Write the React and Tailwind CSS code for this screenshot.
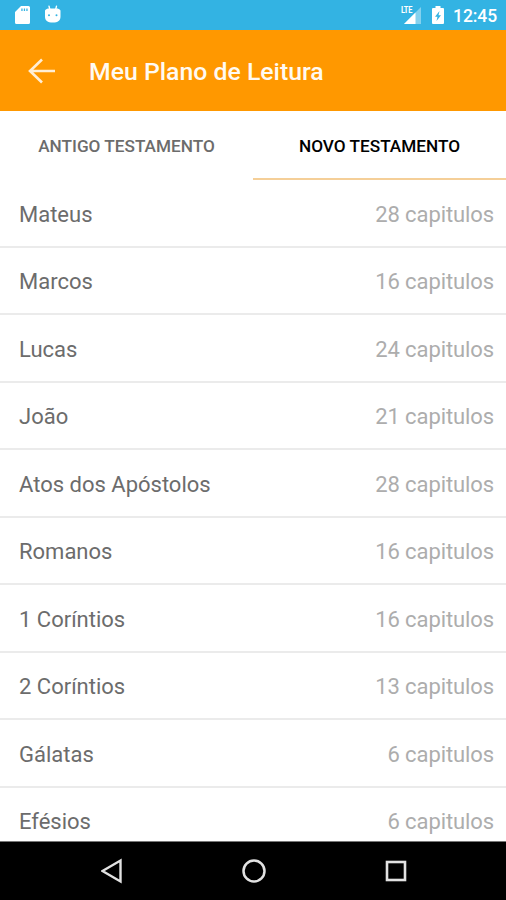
const books = [
  { name: "Mateus", chapters: 28 },
  { name: "Marcos", chapters: 16 },
  { name: "Lucas", chapters: 24 },
  { name: "João", chapters: 21 },
  { name: "Atos dos Apóstolos", chapters: 28 },
  { name: "Romanos", chapters: 16 },
  { name: "1 Coríntios", chapters: 16 },
  { name: "2 Coríntios", chapters: 13 },
  { name: "Gálatas", chapters: 6 },
  { name: "Efésios", chapters: 6 },
];

const StatusBar = () => (
  <div className="flex h-[30px] shrink-0 items-center justify-between bg-[#33b3e3] pl-[15px] pr-[9px] text-white">
    <div className="flex items-center gap-[14px]">
      {/* SD card */}
      <svg width="16" height="20" viewBox="0 0 16 20">
        <path
          fill="currentColor"
          fillRule="evenodd"
          d="M6 1h7.5A1.5 1.5 0 0 1 15 2.5V17.5a1.5 1.5 0 0 1-1.5 1.5h-12A1.5 1.5 0 0 1 0 17.5V7zM6.300 3.5v2.5h1.300v-2.5zm2.5 0v2.5h1.300v-2.5zm2.5 0v2.5h1.300v-2.5z"
        />
      </svg>
      {/* Android head */}
      <svg width="16" height="20" viewBox="0 0 16 20">
        <path
          d="M4 1.200l1 4M11.5 1.200l-1 4"
          stroke="currentColor"
          strokeWidth="1.4"
          strokeLinecap="round"
        />
        <path
          fill="currentColor"
          fillRule="evenodd"
          d="M0 5.5C1 4 2.5 3.5 4 3.5h7.5c1.7 0 3 .5 4 2v6c0 4-2.5 6-7.7 6S0 15.5 0 11.5zM4 9.2a1 1 0 1 0 0 2 1 1 0 0 0 0-2m7.5 0a1 1 0 1 0 0 2 1 1 0 0 0 0-2"
        />
      </svg>
    </div>
    <div className="flex items-center">
      <div className="relative mr-[11px] h-5 w-5">
        <svg width="20" height="20" viewBox="0 0 20 20">
          <path d="M20 2v17H3z" fill="currentColor" opacity=".4" />
          <path d="M14.5 7.5V19H3z" fill="currentColor" />
        </svg>
        <span className="absolute left-0 top-px origin-left scale-x-[.78] text-[9.5px] font-bold leading-[8px] tracking-[-0.4px]">
          LTE
        </span>
      </div>
      {/* Charging battery */}
      <svg className="mr-[9px]" width="12" height="20" viewBox="0 0 12 20">
        <path
          fill="currentColor"
          fillRule="evenodd"
          d="M3.5 1h5v2H11a1 1 0 0 1 1 1v14a1 1 0 0 1-1 1H1a1 1 0 0 1-1-1V4a1 1 0 0 1 1-1h2.5zM7.5 6L3 11.8h2.5L4.5 16 9 10.2H6.5z"
        />
      </svg>
      <span className="translate-y-px text-[17.5px] font-medium leading-5 tracking-[-0.1px]">
        12:45
      </span>
    </div>
  </div>
);

const Header = () => (
  <header className="flex h-[81px] shrink-0 items-center bg-[#ff9800] pl-[28px] text-white">
    <svg width="27" height="26" viewBox="0 0 27 26" fill="none">
      <path
        d="M14 1.5L2 13l12 11.5M2 13h25"
        stroke="#ffeed5"
        strokeWidth="2.6"
      />
    </svg>
    <h1 className="ml-[34px] pt-[2px] text-[24.8px] font-medium leading-8 text-[#fffaf2]">
      Meu Plano de Leitura
    </h1>
  </header>
);

const Tabs = () => (
  <div className="flex h-[69px] shrink-0 text-[17.2px] font-medium">
    <button className="flex-1 border-b-2 border-transparent pt-[5px] text-[#6c6c6c]">
      ANTIGO TESTAMENTO
    </button>
    <button className="flex-1 border-b-2 border-[#f5cf98] pt-[5px] text-black">
      NOVO TESTAMENTO
    </button>
  </div>
);

const BookRow = ({ name, chapters }) => (
  <li className="flex h-[67.5px] shrink-0 items-center justify-between border-b-2 border-[#ebebeb] pl-[19px] pr-3 pt-[3px] text-[22px]">
    <span className="text-[#6c6c6c]">{name}</span>
    <span className="tracking-[-0.1px] text-[#adadad]">{chapters} capitulos</span>
  </li>
);

const NavBar = () => (
  <nav className="flex h-[59px] shrink-0 items-center justify-between border-t border-[#777] bg-black pl-[101px] pr-[99px]">
    <svg width="22" height="26" viewBox="0 0 22 26" fill="none">
      <path d="M19.5 2.5v21L1.5 13z" stroke="#e2e2e2" strokeWidth="2.4" />
    </svg>
    <svg width="24" height="24" viewBox="0 0 24 24" fill="none">
      <circle cx="12" cy="12" r="10.5" stroke="#e2e2e2" strokeWidth="2.5" />
    </svg>
    <svg width="22" height="22" viewBox="0 0 22 22" fill="none">
      <rect x="2" y="2" width="18" height="18" stroke="#e2e2e2" strokeWidth="2.6" />
    </svg>
  </nav>
);

export default function App() {
  return (
    <div className="flex h-[900px] w-[506px] flex-col overflow-hidden bg-white font-['Roboto',sans-serif]">
      <StatusBar />
      <Header />
      <Tabs />
      <ul className="flex min-h-0 flex-1 flex-col overflow-hidden">
        {books.map((book) => (
          <BookRow key={book.name} {...book} />
        ))}
      </ul>
      <NavBar />
    </div>
  );
}
